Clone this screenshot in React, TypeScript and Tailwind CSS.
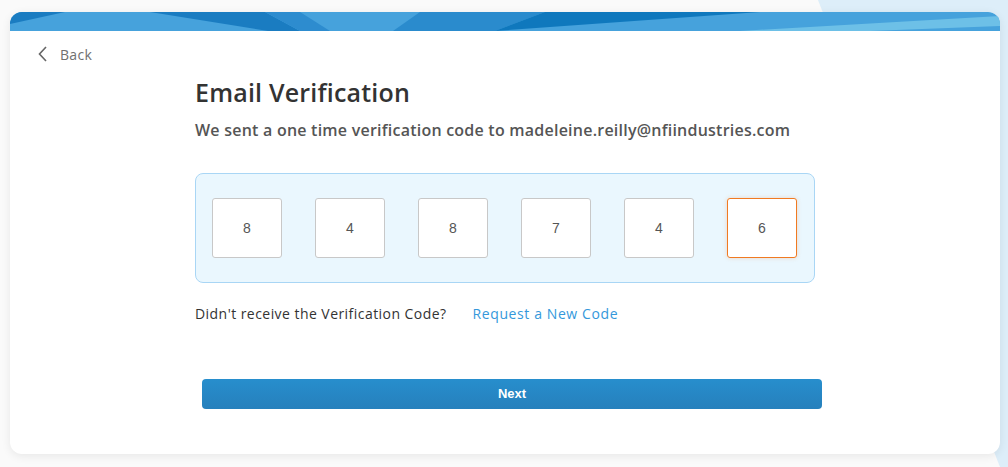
import React from "react";

const digits = ["8", "4", "8", "7", "4", "6"];

function Banner() {
  return (
    <svg className="block h-[19px] w-full" viewBox="0 0 990 19" preserveAspectRatio="none">
      <rect x="0" y="0" width="990" height="19" fill="#46a2dc" />
      <polygon points="0,0 55,0 0,12" fill="#1a7cc1" />
      <polygon points="140,0 255,0 290,19 258,19" fill="#1a7cc1" />
      <polygon points="255,0 290,0 320,19 290,19" fill="#2d8ccf" />
      <polygon points="410,0 535,0 485,19 383,19" fill="#2a8bcd" />
      <polygon points="535,0 750,0 485,19" fill="#0f78bd" />
      <polygon points="730,19 990,4 990,14 860,19" fill="#6dc0e7" />
    </svg>
  );
}

export default function App() {
  return (
    <div
      className="relative h-[467px] w-[1008px] overflow-hidden bg-[#fafafa]"
      style={{ fontFamily: '"Open Sans", "Liberation Sans", sans-serif' }}
    >
      {/* background shape */}
      <svg className="absolute inset-0" width="1008" height="467">
        <polygon points="818,0 1008,0 1008,467 1000,467" fill="#ddeef9" />
      </svg>

      <div className="relative px-[8px] pt-[12px] pl-[10px]">
        <div className="overflow-hidden rounded-[12px] bg-white pb-[45px] shadow-[0_2px_10px_rgba(0,0,0,0.08)]">
          <Banner />

          {/* Back */}
          <div className="mt-[13px] flex h-[20px] items-center pl-[28px] text-[14px] tracking-[0.3px] text-[#707070]">
            <svg width="10" height="16" viewBox="0 0 10 16" fill="none" stroke="#666" strokeWidth="1.6">
              <polyline points="8,1 1.5,8 8,15" />
            </svg>
            <span className="ml-[12px]">Back</span>
          </div>

          <div className="ml-[185px] w-[620px]">
            <h1 className="mt-[12px] text-[25px] leading-[32px] font-semibold tracking-[0.2px] text-[#333]">
              Email Verification
            </h1>
            <p className="mt-[10px] text-[16px] leading-[24px] font-semibold tracking-[0.23px] text-[#555]">
              We sent a one time verification code to madeleine.reilly@nfiindustries.com
            </p>

            <div className="mt-[31px] flex gap-[33px] rounded-[8px] border border-[#a9d6f5] bg-[#eaf7fe] px-[16px] py-[24px]">
              {digits.map((d, i) => (
                <div
                  key={i}
                  className={
                    i === digits.length - 1
                      ? "flex h-[60px] w-[70px] items-center justify-center rounded-[3px] border border-[#f07a22] bg-white text-[14px] text-[#555] shadow-[0_0_4px_rgba(240,122,34,0.25)]"
                      : "flex h-[60px] w-[70px] items-center justify-center rounded-[3px] border border-[#c8c8c8] bg-white text-[14px] text-[#555]"
                  }
                  style={{ fontFamily: '"Liberation Sans", Arial, sans-serif' }}
                >
                  {d}
                </div>
              ))}
            </div>

            <div className="mt-[20px] flex h-[20px] items-center text-[14px]">
              <span className="tracking-[0.45px] text-[#333]">Didn't receive the Verification Code?</span>
              <span className="ml-[26px] tracking-[0.6px] text-[#3498db]">Request a New Code</span>
            </div>
          </div>

          <button
            className="mt-[56px] ml-[192px] flex h-[30px] w-[620px] items-center justify-center rounded-[4px] bg-gradient-to-b from-[#278ecd] to-[#2680bc] text-[13px] font-bold text-white"
            style={{ fontFamily: '"Liberation Sans", Arial, sans-serif' }}
          >
            Next
          </button>
        </div>
      </div>
    </div>
  );
}
